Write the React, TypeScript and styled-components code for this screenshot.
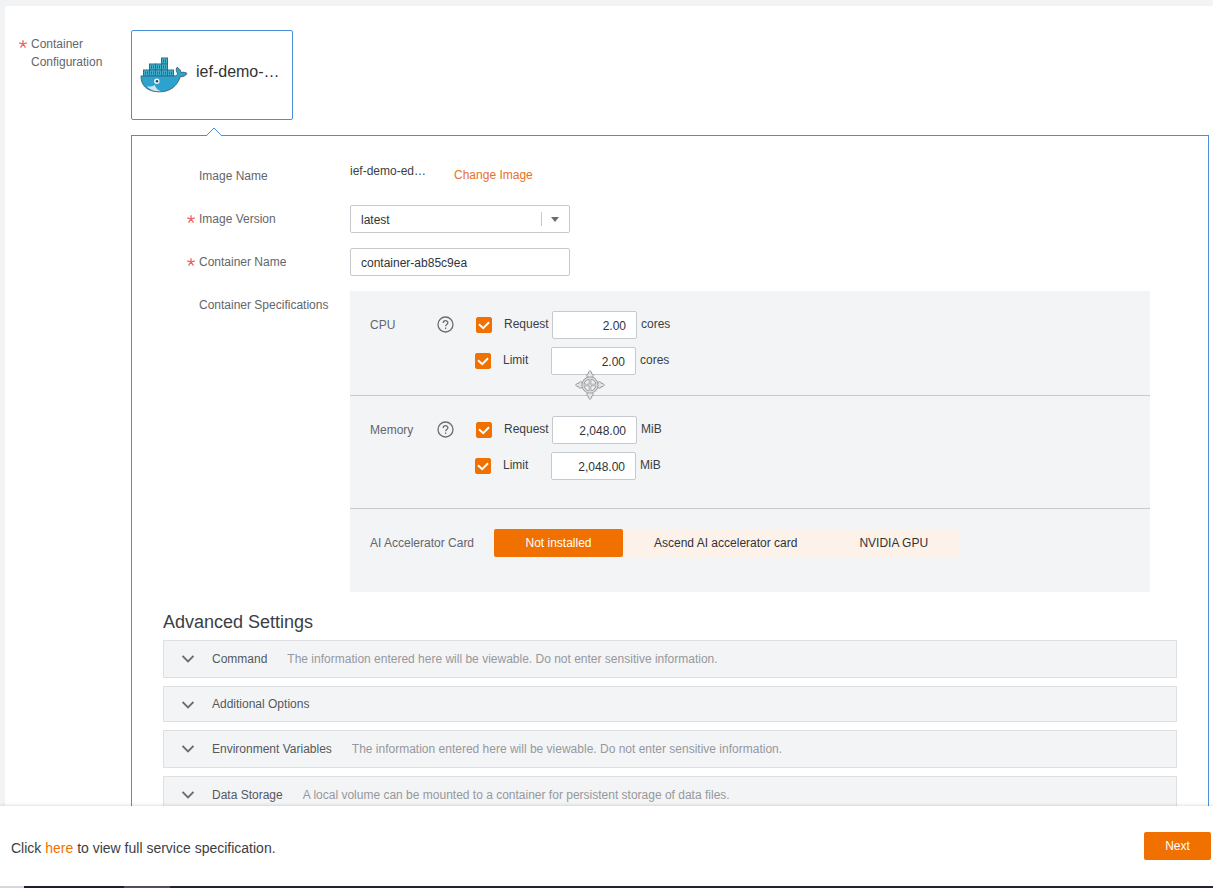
import React from "react";
import styled, { createGlobalStyle } from "styled-components";

const GlobalStyle = createGlobalStyle`
  *, *::before, *::after { box-sizing: border-box; }
  html, body { margin: 0; padding: 0; }
  body, button, input, select {
    font-family: "Liberation Sans", Arial, Helvetica, sans-serif;
    font-size: 12px;
    line-height: 18px;
  }
  body { background: #f2f3f5; color: #3b3e43; }
`;

const Page = styled.div`
  display: flex;
  flex-direction: column;
  height: 100vh;
  overflow: hidden;
`;

const Content = styled.main`
  flex: 1;
  min-height: 0;
  overflow: hidden;
  padding: 6px 0 0 5px;
`;

const Sheet = styled.section`
  display: flex;
  align-items: flex-start;
  background: #fff;
  padding: 24px 4px 24px 0;
  border-radius: 2px 0 0 0;
`;

const SideLabel = styled.div`
  display: flex;
  flex: none;
  width: 126px;
  padding: 5px 0 0 14px;
  color: #63666b;
`;

const Star = styled.svg`
  flex: none;
  width: 8px;
  height: 8px;
  margin: 5px 4px 0 0;
  stroke: #f0625f;
`;

const Column = styled.div`
  flex: 1;
  min-width: 0;
`;

const ImageCard = styled.button`
  display: flex;
  align-items: center;
  gap: 8px;
  width: 162px;
  height: 90px;
  margin-bottom: 15px;
  padding: 0 8px;
  background: #fff;
  border: 1px solid #4a90d9;
  border-radius: 2px;
  color: #303338;
  font-size: 16px;
`;

const CardName = styled.span`
  padding-bottom: 6px;
`;

const Panel = styled.div`
  position: relative;
  padding: 26px 31px 24px;
  border: 1px solid #4a90d9;
`;

const Notch = styled.svg`
  position: absolute;
  top: -9px;
  left: 74px;
  width: 16px;
  height: 9px;
`;

const Form = styled.div`
  display: flex;
  flex-direction: column;
  gap: 15px;
  padding: 0 27px 0 24px;
`;

const FormRow = styled.div`
  display: flex;
  align-items: flex-start;
`;

const LabelCell = styled.div`
  display: flex;
  flex: none;
  width: 163px;
  padding-top: 5px;
  color: #63666b;
`;

const StarSlot = styled.span`
  flex: none;
  display: flex;
  width: 12px;
`;

const ImageValue = styled.div`
  display: flex;
  gap: 28px;
  height: 28px;
`;

const ImageLink = styled.a`
  color: #e8702a;
  text-decoration: none;
  padding-top: 4px;
`;

const TextBox = styled.input`
  width: 220px;
  height: 28px;
  padding: 2px 10px 0;
  background: #fff;
  border: 1px solid #c6c9cd;
  border-radius: 2px;
  color: #303338;
`;

const SelectWrap = styled.div`
  position: relative;
`;

const SelectBox = styled.select`
  display: block;
  appearance: none;
  width: 220px;
  height: 28px;
  padding: 2px 32px 0 10px;
  background: #fff;
  border: 1px solid #c6c9cd;
  border-radius: 2px;
  color: #303338;
`;

const SelectArrow = styled.svg`
  position: absolute;
  top: 6px;
  right: 10px;
  width: 19px;
  height: 16px;
  pointer-events: none;
`;

const SpecBox = styled.div`
  flex: 1;
  min-width: 0;
  background: #f3f4f6;
`;

const SpecSection = styled.div<{ $bottom: number }>`
  position: relative;
  display: flex;
  align-items: flex-start;
  padding: 20px 20px ${(p) => p.$bottom}px;
  & + & { border-top: 1px solid #c6c9cd; }
`;

const SpecLabel = styled.div<{ $wide?: boolean }>`
  width: ${(p) => (p.$wide ? 124 : 67)}px;
  padding-top: 5px;
  color: #63666b;
`;

const HelpButton = styled.button`
  display: flex;
  width: 17px;
  height: 17px;
  margin: 5px 21px 0 0;
  padding: 0;
  border: 0;
  background: none;
`;

const Limits = styled.div`
  display: flex;
  flex-direction: column;
  gap: 8px;
`;

const LimitRow = styled.div<{ $first?: boolean }>`
  display: flex;
  align-items: flex-start;
  padding-left: ${(p) => (p.$first ? 1 : 0)}px;
`;

const CheckLabel = styled.label`
  position: relative;
  display: flex;
  gap: 12px;
  width: 76px;
  padding-top: 4px;
`;

const Check = styled.input`
  appearance: none;
  flex: none;
  width: 16px;
  height: 16px;
  margin: 2px 0 0;
  background: #f3f4f6;
  border: 1px solid #c6c9cd;
  border-radius: 2px;
  &:checked { background: #f07000; border-color: #f07000; }
  &:not(:checked) + svg { display: none; }
`;

const Tick = styled.svg`
  position: absolute;
  top: 6px;
  left: 0;
  width: 16px;
  height: 16px;
  pointer-events: none;
`;

const NumberBox = styled(TextBox)`
  width: 85px;
  text-align: right;
`;

const Unit = styled.span`
  padding: 4px 0 0 4px;
`;

const Pointer = styled.svg`
  position: absolute;
  z-index: 1;
  top: 79px;
  left: 225px;
  width: 30px;
  height: 30px;
`;

const Segments = styled.div`
  display: flex;
`;

const Segment = styled.button<{ $on?: boolean }>`
  height: 28px;
  min-width: 129px;
  padding: 0 31px;
  border: 0;
  border-radius: ${(p) => (p.$on ? 2 : 0)}px;
  background: ${(p) => (p.$on ? "#f07000" : "#fdf2ea")};
  color: ${(p) => (p.$on ? "#fff" : "#303338")};
`;

const Heading = styled.h2`
  margin: 18px 0 6px;
  font-size: 18px;
  line-height: 24px;
  font-weight: 400;
`;

const Accordion = styled.div`
  display: flex;
  flex-direction: column;
  gap: 8px;
`;

const AccordionItem = styled.button`
  display: flex;
  align-items: baseline;
  width: 100%;
  padding: 8px 18px;
  background: #f3f4f6;
  border: 1px solid #dddfe2;
  color: #55585d;
  text-align: left;
`;

const Chevron = styled.svg`
  flex: none;
  align-self: flex-start;
  width: 12px;
  height: 8px;
  margin: 6px 18px 0 0;
`;

const Hint = styled.span`
  padding-left: 20px;
  line-height: 20px;
  color: #96989c;
`;

const Footer = styled.footer`
  position: relative;
  display: flex;
  flex: none;
  align-items: center;
  justify-content: space-between;
  height: 82px;
  padding: 0 2px 2px 11px;
  background: #fff;
  box-shadow: 0 -1px 3px rgba(0, 0, 0, 0.12);
`;

const FooterText = styled.p`
  margin: 0;
  padding-top: 4px;
  font-size: 14px;
  line-height: 20px;
`;

const FooterLink = styled.a`
  color: #f07000;
  text-decoration: none;
`;

const NextButton = styled.button`
  width: 67px;
  height: 28px;
  border: 0;
  border-radius: 2px;
  background: #f07000;
  color: #fff;
`;

const BottomEdge = styled.div`
  position: absolute;
  bottom: 0;
  left: 0;
  right: 0;
  height: 2px;
  background: linear-gradient(90deg, #d5d7da 24px, #1c1f2c 24px, #1c1f2c 124px, #4a4f5a 124px, #4a4f5a 170px, #1f2433 170px);
`;

const RequiredStar = () => (
  <Star viewBox="0 0 8 8" fill="none" strokeWidth="1.3" aria-hidden="true">
    <path d="M4 0.2V4M4 4L0.2 2.8M4 4L7.8 2.8M4 4L1.5 7.6M4 4L6.5 7.6" />
  </Star>
);

const containers = [
  [21, 0],
  [9, 6], [15, 6], [21, 6],
  [3, 12], [9, 12], [15, 12], [21, 12], [27, 12],
];

const Whale = () => (
  <svg width="48" height="36" viewBox="0 0 48 36" aria-hidden="true">
    {containers.map(([x, y]) => (
      <g key={`${x}-${y}`}>
        <rect x={x + 0.5} y={y + 1} width="6" height="6" fill="#41b1cf" stroke="#356c7c" strokeWidth="1" />
        <path d={`M${x + 2.5} ${y + 2.5}v3M${x + 4.5} ${y + 2.5}v3`} stroke="#28596a" strokeWidth="0.8" />
      </g>
    ))}
    <path
      d="M1 19H33.5C36.5 19 37.9 17.8 37.6 16.2C35.8 14.2 35.8 12.2 37.2 10.2C39.6 11.8 40.9 13.6 41 15.6C43 15 45.2 15.2 47 16.4C45.6 18.8 43.2 19.8 40.2 19.8C37.4 28.4 30.8 34.8 19.6 34.8C7.8 34.8 1 29 1 19Z"
      fill="#2ba2cf" stroke="#3a6876" strokeWidth="1"
    />
    <path d="M6.5 29.3C9.5 29.8 12.5 29.4 14.8 28C15.5 31 17.8 33.4 21 34.2C14.5 34.7 9.8 32.8 6.5 29.3Z" fill="#d3e5ec" />
    <circle cx="16.8" cy="24.2" r="2.7" fill="#f4fafc" />
    <circle cx="17" cy="24.2" r="1.3" fill="#234b59" />
  </svg>
);

const Help = () => (
  <HelpButton type="button" aria-label="Help">
    <svg width="17" height="17" viewBox="0 0 17 17" fill="none" stroke="#6a6d72" strokeWidth="1.3" aria-hidden="true">
      <circle cx="8.5" cy="8.5" r="7.5" />
      <path d="M6.2 7.1C6.2 3.9 10.9 4 10.9 6.8C10.9 8.4 8.6 8.5 8.6 10.3" />
      <path d="M8.6 11.5V13" />
    </svg>
  </HelpButton>
);

const Crosshair = () => (
  <Pointer viewBox="0 0 30 30" aria-hidden="true">
    <g fill="#e4e5e7" stroke="#96989b" strokeWidth="1">
      {[0, 90, 180, 270].map((a) => (
        <path
          key={a}
          transform={`rotate(${a} 15 15)`}
          d="M13.4 8.5V7C11.2 7.2 11.1 4 13.2 4C13.2 2.6 14 1.4 15 0.5C16 1.4 16.8 2.6 16.8 4C18.9 4 18.8 7.2 16.6 7V8.5"
        />
      ))}
    </g>
    <circle cx="15" cy="15" r="7" fill="#f0f1f3" stroke="#8f9195" strokeWidth="3" />
    <circle cx="15" cy="15" r="7" fill="none" stroke="#dfe0e2" strokeWidth="1.3" />
    <path d="M15 9.5V20.5M9.5 15H20.5" stroke="#96989b" strokeWidth="2.6" />
    <path d="M15 8.5V21.5M8.5 15H21.5" stroke="#e4e5e7" strokeWidth="1" />
  </Pointer>
);

type LimitProps = { group: string; name: string; value: string; unit: string; first?: boolean };

const Limit = ({ group, name, value, unit, first }: LimitProps) => (
  <LimitRow $first={first}>
    <CheckLabel>
      <Check type="checkbox" defaultChecked />
      <Tick viewBox="0 0 16 16" fill="none" stroke="#fff" strokeWidth="2">
        <path d="M3 7.2L7.2 11.2L13 5.2" />
      </Tick>
      {name}
    </CheckLabel>
    <NumberBox type="text" defaultValue={value} aria-label={`${group} ${name} (${unit})`} />
    <Unit>{unit}</Unit>
  </LimitRow>
);

const sensitive = "The information entered here will be viewable. Do not enter sensitive information.";
const settings = [
  { title: "Command", hint: sensitive },
  { title: "Additional Options" },
  { title: "Environment Variables", hint: sensitive },
  { title: "Data Storage", hint: "A local volume can be mounted to a container for persistent storage of data files." },
];

export default function App() {
  return (
    <Page>
      <GlobalStyle />
      <Content>
        <Sheet>
          <SideLabel>
            <RequiredStar />
            <span>Container<br />Configuration</span>
          </SideLabel>
          <Column>
            <ImageCard type="button">
              <Whale />
              <CardName>ief-demo-…</CardName>
            </ImageCard>
            <Panel>
              <Notch viewBox="0 0 16 9" aria-hidden="true">
                <path d="M1 8.5L8 1L15 8.5V9H1Z" fill="#fff" />
                <path d="M0.5 8.5L8 1L15.5 8.5" fill="none" stroke="#4a90d9" />
              </Notch>
              <Form>
                <FormRow>
                  <LabelCell><StarSlot />Image Name</LabelCell>
                  <ImageValue>
                    <span>ief-demo-ed…</span>
                    <ImageLink href="#change-image">Change Image</ImageLink>
                  </ImageValue>
                </FormRow>
                <FormRow>
                  <LabelCell>
                    <StarSlot><RequiredStar /></StarSlot>
                    <label htmlFor="image-version">Image Version</label>
                  </LabelCell>
                  <SelectWrap>
                    <SelectBox id="image-version" defaultValue="latest">
                      <option value="latest">latest</option>
                    </SelectBox>
                    <SelectArrow viewBox="0 0 19 16" aria-hidden="true">
                      <path d="M0.5 1V15" stroke="#c6c9cd" />
                      <path d="M10 6H18L14 11Z" fill="#6a6d72" />
                    </SelectArrow>
                  </SelectWrap>
                </FormRow>
                <FormRow>
                  <LabelCell>
                    <StarSlot><RequiredStar /></StarSlot>
                    <label htmlFor="container-name">Container Name</label>
                  </LabelCell>
                  <TextBox id="container-name" type="text" defaultValue="container-ab85c9ea" />
                </FormRow>
                <FormRow>
                  <LabelCell><StarSlot />Container Specifications</LabelCell>
                  <SpecBox>
                    <SpecSection $bottom={20}>
                      <SpecLabel>CPU</SpecLabel>
                      <Help />
                      <Limits>
                        <Limit group="CPU" name="Request" value="2.00" unit="cores" first />
                        <Limit group="CPU" name="Limit" value="2.00" unit="cores" />
                      </Limits>
                      <Crosshair />
                    </SpecSection>
                    <SpecSection $bottom={28}>
                      <SpecLabel>Memory</SpecLabel>
                      <Help />
                      <Limits>
                        <Limit group="Memory" name="Request" value="2,048.00" unit="MiB" first />
                        <Limit group="Memory" name="Limit" value="2,048.00" unit="MiB" />
                      </Limits>
                    </SpecSection>
                    <SpecSection $bottom={35}>
                      <SpecLabel $wide>AI Accelerator Card</SpecLabel>
                      <Segments>
                        <Segment type="button" $on>Not installed</Segment>
                        <Segment type="button">Ascend AI accelerator card</Segment>
                        <Segment type="button">NVIDIA GPU</Segment>
                      </Segments>
                    </SpecSection>
                  </SpecBox>
                </FormRow>
              </Form>
              <Heading>Advanced Settings</Heading>
              <Accordion>
                {settings.map((s) => (
                  <AccordionItem key={s.title} type="button" aria-expanded={false}>
                    <Chevron viewBox="0 0 12 8" fill="none" stroke="#6a6d72" strokeWidth="1.8" aria-hidden="true">
                      <path d="M0.6 1L6 6.4L11.4 1" />
                    </Chevron>
                    {s.title}
                    {s.hint && <Hint>{s.hint}</Hint>}
                  </AccordionItem>
                ))}
              </Accordion>
            </Panel>
          </Column>
        </Sheet>
      </Content>
      <Footer>
        <FooterText>
          Click <FooterLink href="#specification">here</FooterLink> to view full service specification.
        </FooterText>
        <NextButton type="button">Next</NextButton>
        <BottomEdge />
      </Footer>
    </Page>
  );
}
